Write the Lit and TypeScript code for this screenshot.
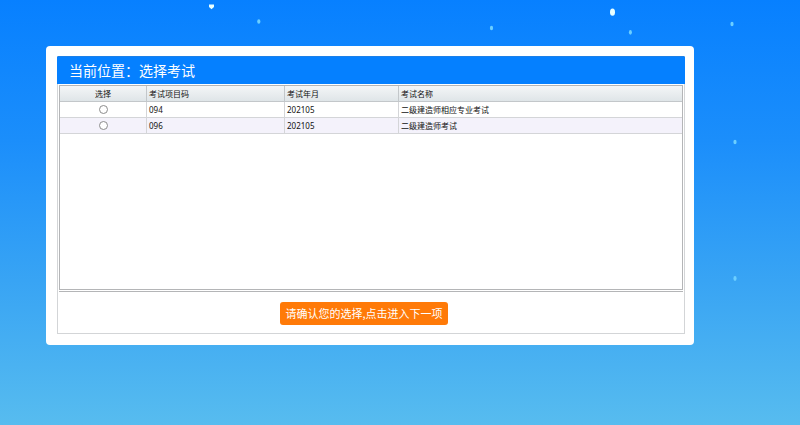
import { LitElement, html, css } from "lit";
import { customElement, state } from "lit/decorators.js";

interface Exam {
  code: string;
  month: string;
  name: string;
}

const EXAMS: Exam[] = [
  { code: "094", month: "202105", name: "二级建造师相应专业考试" },
  { code: "096", month: "202105", name: "二级建造师考试" },
];

@customElement("star-sky")
class StarSky extends LitElement {
  static styles = css`
    :host {
      position: absolute;
      inset: 0;
      overflow: hidden;
      pointer-events: none;
    }
    svg {
      display: block;
    }
    .bright {
      fill: #e8ffff;
    }
    .dim {
      fill: #6ccfff;
    }
  `;

  render() {
    return html`
      <svg width="800" height="425" viewBox="0 0 800 425" aria-hidden="true">
        <path class="bright" d="M209 4.5H214V7L211.5 9.2L209 7Z" />
        <ellipse class="bright" cx="612.5" cy="12.2" rx="2.5" ry="3.6" />
        <g class="dim">
          <ellipse cx="258.8" cy="21.5" rx="1.6" ry="2.2" />
          <ellipse cx="491.5" cy="28" rx="1.6" ry="2.2" />
          <ellipse cx="630.4" cy="32.3" rx="1.5" ry="2.4" />
          <ellipse cx="732" cy="24" rx="1.6" ry="2.3" />
          <ellipse cx="735" cy="142" rx="1.6" ry="2.2" />
          <ellipse cx="735" cy="278.5" rx="1.6" ry="2.4" />
        </g>
      </svg>
    `;
  }
}

@customElement("app-root")
class AppRoot extends LitElement {
  @state() private selected = "";

  static styles = css`
    :host {
      display: block;
      position: relative;
      box-sizing: border-box;
      min-height: 100vh;
      padding: 46px 106px 46px 46px;
      background: linear-gradient(#0780ff, #1b8efb 33%, #38a4f4 66%, #57bcef);
      font-family: "Noto Sans", "Noto Sans CJK SC", sans-serif;
      color: #111;
    }
    .card {
      position: relative;
      padding: 10px 9px 11px 11px;
      border-radius: 4px;
      background: #fff;
    }
    .panel {
      border: 1px solid #d3d5d7;
      border-top-color: #1c80e8;
    }
    .title {
      margin: 0 -1px;
      padding-left: 12px;
      background: #0580ff;
      color: #fff;
      font-size: 14px;
      font-weight: 400;
      line-height: 27px;
      font-family: "Noto Sans CJK SC", sans-serif;
    }
    .grid {
      min-height: 203px;
      margin: 1px 1px 0;
      border: 1px solid #b4b5b7;
    }
    table {
      width: 100%;
      border-collapse: separate;
      border-spacing: 0;
      table-layout: fixed;
      font-size: 8px;
      line-height: 15px;
    }
    th,
    td {
      padding: 0 2px;
      border-right: 1px solid #d4d5d8;
      border-bottom: 1px solid #d4d5d8;
      text-align: left;
      font-weight: 400;
    }
    th {
      border-right-color: #c3c7ca;
      border-bottom-color: #c3c7ca;
      background: linear-gradient(#f4f6f7, #dfe5e8);
    }
    th:last-child,
    td:last-child {
      border-right: 0;
    }
    tbody tr:nth-child(even) {
      background: #f4f2fb;
    }
    .pick {
      width: 82px;
      text-align: center;
    }
    .code {
      width: 133px;
    }
    .month {
      width: 109px;
    }
    input {
      appearance: none;
      display: block;
      box-sizing: border-box;
      width: 9px;
      height: 9px;
      margin: 0 auto;
      border: 1px solid #8c8c8c;
      border-radius: 50%;
      background: #fff;
    }
    input:checked {
      background: radial-gradient(#333 40%, #fff 50%);
    }
    .actions {
      margin: 1px 1px 0;
      padding: 10px 14px 8px 0;
      border-top: 1px solid #b4b5b7;
      text-align: center;
    }
    button {
      display: block;
      margin: 0 auto;
      padding: 0 5px;
      border: 0;
      border-radius: 3px;
      background: #ff7a08;
      color: #fff;
      font-family: "Noto Sans CJK SC", sans-serif;
      font-size: 11px;
      line-height: 23px;
      font-weight: 400;
      white-space: nowrap;
    }
  `;

  render() {
    return html`
      <star-sky></star-sky>
      <main class="card">
        <section class="panel">
          <div class="title" role="heading" aria-level="1">当前位置：选择考试</div>
          <div class="grid">
            <table>
              <thead>
                <tr>
                  <th class="pick">选择</th>
                  <th class="code">考试项目码</th>
                  <th class="month">考试年月</th>
                  <th>考试名称</th>
                </tr>
              </thead>
              <tbody>
                ${EXAMS.map(
                  (exam) => html`
                    <tr>
                      <td class="pick">
                        <input
                          type="radio"
                          name="exam"
                          aria-label=${exam.name}
                          .checked=${this.selected === exam.code}
                          @change=${() => (this.selected = exam.code)}
                        />
                      </td>
                      <td>${exam.code}</td>
                      <td>${exam.month}</td>
                      <td>${exam.name}</td>
                    </tr>
                  `
                )}
              </tbody>
            </table>
          </div>
          <div class="actions">
            <button type="button">请确认您的选择,点击进入下一项</button>
          </div>
        </section>
      </main>
    `;
  }
}
